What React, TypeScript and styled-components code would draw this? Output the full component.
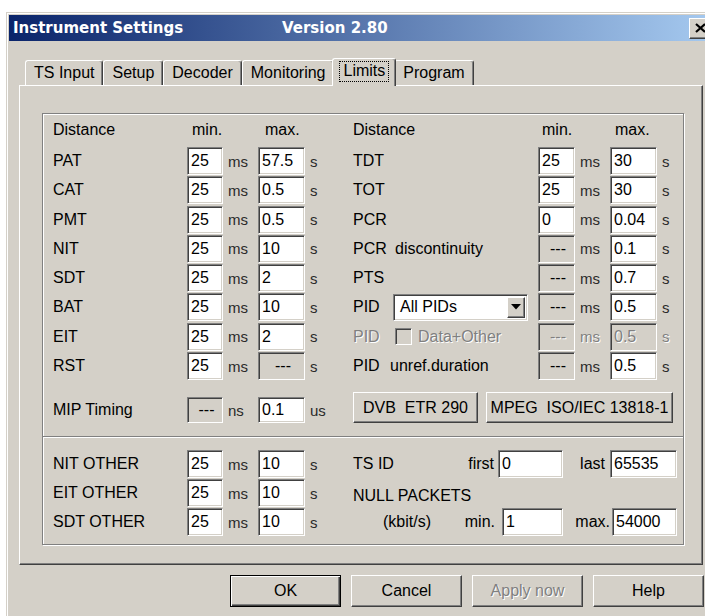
import React from "react";
import styled, { createGlobalStyle, css } from "styled-components";

const FACE = "#d4d0c8";

const GlobalStyle = createGlobalStyle`
  html, body { margin: 0; padding: 0; background: #fff; overflow: hidden; }
  body { font-family: "Liberation Sans", Arial, sans-serif; font-size: 16px; color: #000; }
  * { box-sizing: border-box; }
`;

const sunken = css`
  border: 1px solid;
  border-color: #808080 #fff #fff #808080;
  box-shadow: inset 1px 1px 0 #404040, inset -1px -1px 0 ${FACE};
`;

const raised = css`
  border: 1px solid;
  border-color: #fff #404040 #404040 #fff;
  box-shadow: inset -1px -1px 0 #808080, inset 1px 1px 0 ${FACE};
`;

const dimText = css`
  color: #808080;
  text-shadow: 1px 1px 0 #fff;
`;

const Window = styled.div`
  margin: 12px 0 0 6px;
  width: 712px;
  height: 640px;
  background: ${FACE};
  border: 1px solid;
  border-color: ${FACE} #404040 #404040 ${FACE};
  box-shadow: inset 1px 1px 0 #fff, inset -1px -1px 0 #808080;
  padding: 2px;
`;

const TitleBar = styled.div`
  height: 26px;
  display: flex;
  align-items: center;
  padding: 0 4px 0 4px;
  background: linear-gradient(90deg, #0a246a 0%, #a6caf0 100%);
  color: #fff;
  font: bold 15px "DejaVu Sans", Verdana, sans-serif;
  white-space: nowrap;
`;

const Title = styled.span`
  width: 269px;
`;

const Version = styled.span`
  flex: 1;
`;

const CloseButton = styled.div`
  ${raised};
  width: 22px;
  height: 21px;
  background: ${FACE};
  display: flex;
  align-items: center;
  justify-content: center;
`;

const Body = styled.div`
  padding: 17px 0 0 10px;
`;

const TabStrip = styled.div`
  display: flex;
  align-items: flex-end;
  height: 27px;
  padding-left: 6px;
`;

const Tab = styled.div<{ $active?: boolean }>`
  position: relative;
  z-index: ${(p) => (p.$active ? 2 : 1)};
  display: flex;
  align-items: center;
  height: ${(p) => (p.$active ? 28 : 25)}px;
  margin: ${(p) => (p.$active ? "0 -2px -1px" : "0")};
  padding: ${(p) => (p.$active ? "0 10px 2px" : "0 8px")};
  background: ${FACE};
  border-top: 1px solid #fff;
  border-left: 1px solid #fff;
  border-right: 1px solid #404040;
  box-shadow: inset -1px 0 0 #808080;
  border-radius: 3px 3px 0 0;
  white-space: nowrap;
`;

const FocusLabel = styled.span`
  border: 1px dotted #000;
  padding: 0 3px 1px;
  margin: 0 -4px;
`;

const Panel = styled.div`
  width: 684px;
  border: 1px solid;
  border-color: #fff #404040 #404040 #fff;
  box-shadow: inset -1px -1px 0 #808080;
  padding: 27px 18px 19px 22px;
`;

const GroupBox = styled.div`
  border: 1px solid #808080;
  box-shadow: 1px 1px 0 #fff, inset 1px 1px 0 #fff;
  display: flex;
  flex-direction: column;
`;

const columns = css`
  display: grid;
  grid-template-columns: 134px 36px 35px 47px 48px 185px 37px 35px 47px 1fr;
  padding-left: 10px;
`;

const HeaderGrid = styled.div`
  ${columns};
  height: 18px;
  margin-top: 7px;
  align-items: center;
`;

const LimitGrid = styled.div`
  ${columns};
  grid-auto-rows: 28px;
  row-gap: 1.3px;
  margin-top: 8px;
`;

const MipGrid = styled.div`
  ${columns};
  height: 31px;
  margin-top: 12px;
`;

const Divider = styled.div`
  height: 2px;
  margin-top: 13px;
  border-top: 1px solid #808080;
  border-bottom: 1px solid #fff;
`;

const OtherGrid = styled.div`
  display: grid;
  grid-template-columns: 134px 36px 35px 47px 48px 145px 65px 47px 67px;
  grid-template-rows: repeat(3, 28px);
  row-gap: 1px;
  padding-left: 10px;
  margin: 12px 0 8px;
`;

const Cell = styled.div<{ $dim?: boolean; $pad?: number; $end?: boolean; $bottom?: boolean }>`
  display: flex;
  align-items: ${(p) => (p.$bottom ? "flex-end" : "center")};
  justify-content: ${(p) => (p.$end ? "flex-end" : "flex-start")};
  padding-left: ${(p) => p.$pad ?? 0}px;
  white-space: pre;
  ${(p) => p.$dim && dimText};
`;

const Unit = styled(Cell)`
  padding-left: 5px;
  font-size: 15px;
  color: ${(p) => (p.$dim ? "#808080" : "#2a2a2a")};
`;

const Lead = styled.span<{ $w: number }>`
  display: inline-block;
  width: ${(p) => p.$w}px;
`;

const Field = styled.input<{ $face?: boolean; $dim?: boolean; $center?: boolean }>`
  ${sunken};
  width: 100%;
  height: 100%;
  min-width: 0;
  margin: 0;
  padding: 0 0 0 3px;
  font: 16px "Liberation Sans", Arial, sans-serif;
  color: #000;
  background: ${(p) => (p.$face ? FACE : "#fff")};
  text-align: ${(p) => (p.$center ? "center" : "left")};
  outline: none;
  ${(p) => p.$dim && dimText};
`;

const ShortField = styled(Field)`
  align-self: end;
  height: 26px;
`;

const OffsetField = styled(Field)<{ $shift: number }>`
  margin-left: ${(p) => p.$shift}px;
  width: calc(100% - ${(p) => p.$shift}px);
`;

const Combo = styled.div`
  ${sunken};
  width: 135px;
  height: 27px;
  background: #fff;
  display: flex;
  align-items: center;
  justify-content: space-between;
  padding: 0 2px 0 6px;
`;

const ComboArrow = styled.div`
  ${raised};
  width: 18px;
  height: 21px;
  background: ${FACE};
  display: flex;
  align-items: center;
  justify-content: center;
`;

const CheckBox = styled.span`
  ${sunken};
  display: inline-block;
  width: 17px;
  height: 17px;
  margin-right: 6px;
  background: ${FACE};
`;

const StandardButtons = styled.div`
  grid-column: 6 / -1;
  display: flex;
  gap: 8px;
`;

const PushButton = styled.button<{ $w?: number; $default?: boolean }>`
  ${raised};
  width: ${(p) => p.$w ?? 111}px;
  height: ${(p) => (p.$w ? 31 : 32)}px;
  padding: 0;
  background: ${FACE};
  font: 16px "Liberation Sans", Arial, sans-serif;
  color: #000;
  white-space: pre;
  ${(p) =>
    p.$default &&
    css`
      border: 1px solid #000;
      box-shadow: inset 1px 1px 0 #fff, inset -1px -1px 0 #404040, inset -2px -2px 0 #808080;
    `}
  &:disabled {
    ${dimText};
  }
`;

const ButtonRow = styled.div`
  display: flex;
  gap: 10px;
  margin-top: 10px;
  padding-left: 211px;
`;

type Side = {
  label: React.ReactNode;
  min: string | null;
  max: string | null;
  dim?: boolean;
};

const leftRows: Side[] = [
  { label: "PAT", min: "25", max: "57.5" },
  { label: "CAT", min: "25", max: "0.5" },
  { label: "PMT", min: "25", max: "0.5" },
  { label: "NIT", min: "25", max: "10" },
  { label: "SDT", min: "25", max: "2" },
  { label: "BAT", min: "25", max: "10" },
  { label: "EIT", min: "25", max: "2" },
  { label: "RST", min: "25", max: null },
];

const rightRows: Side[] = [
  { label: "TDT", min: "25", max: "30" },
  { label: "TOT", min: "25", max: "30" },
  { label: "PCR", min: "0", max: "0.04" },
  {
    label: (
      <>
        <Lead $w={42}>PCR</Lead>discontinuity
      </>
    ),
    min: null,
    max: "0.1",
  },
  { label: "PTS", min: null, max: "0.7" },
  {
    label: (
      <>
        <Lead $w={40}>PID</Lead>
        <Combo>
          All PIDs
          <ComboArrow>
            <svg width="10" height="6" viewBox="0 0 10 6">
              <polygon points="0,0 10,0 5,5.5" fill="#000" />
            </svg>
          </ComboArrow>
        </Combo>
      </>
    ),
    min: null,
    max: "0.5",
  },
  {
    label: (
      <>
        <Lead $w={42}>PID</Lead>
        <CheckBox />
        Data+Other
      </>
    ),
    min: null,
    max: "0.5",
    dim: true,
  },
  {
    label: (
      <>
        <Lead $w={37}>PID</Lead>unref.duration
      </>
    ),
    min: null,
    max: "0.5",
  },
];

function SideCells({ side }: { side: Side }) {
  return (
    <>
      <Cell $dim={side.dim}>{side.label}</Cell>
      {side.min === null ? (
        <Field readOnly defaultValue="---" $face $center $dim={side.dim} />
      ) : (
        <Field readOnly defaultValue={side.min} />
      )}
      <Unit $dim={side.dim}>ms</Unit>
      {side.max === null ? (
        <Field readOnly defaultValue="---" $face $center />
      ) : (
        <Field readOnly defaultValue={side.max} $face={side.dim} $dim={side.dim} />
      )}
      <Unit $dim={side.dim}>s</Unit>
    </>
  );
}

const otherRows = [
  { label: "NIT OTHER", min: "25", max: "10" },
  { label: "EIT OTHER", min: "25", max: "10" },
  { label: "SDT OTHER", min: "25", max: "10" },
];

const tabs = ["TS Input", "Setup", "Decoder", "Monitoring", "Limits", "Program"];

export default function App() {
  return (
    <>
      <GlobalStyle />
      <Window>
        <TitleBar>
          <Title>Instrument Settings</Title>
          <Version>Version 2.80</Version>
          <CloseButton>
            <svg width="11" height="10" viewBox="0 0 11 10">
              <path d="M1 1 L10 9 M10 1 L1 9" stroke="#000" strokeWidth="2.2" />
            </svg>
          </CloseButton>
        </TitleBar>
        <Body>
          <TabStrip>
            {tabs.map((t) => (
              <Tab key={t} $active={t === "Limits"}>
                {t === "Limits" ? <FocusLabel>{t}</FocusLabel> : t}
              </Tab>
            ))}
          </TabStrip>
          <Panel>
            <GroupBox>
              <HeaderGrid>
                <Cell>Distance</Cell>
                <Cell $pad={5}>min.</Cell>
                <Cell />
                <Cell $pad={7}>max.</Cell>
                <Cell />
                <Cell>Distance</Cell>
                <Cell $pad={4}>min.</Cell>
                <Cell />
                <Cell $pad={5}>max.</Cell>
                <Cell />
              </HeaderGrid>
              <LimitGrid>
                {leftRows.map((l, i) => (
                  <React.Fragment key={i}>
                    <SideCells side={l} />
                    <SideCells side={rightRows[i]} />
                  </React.Fragment>
                ))}
              </LimitGrid>
              <MipGrid>
                <Cell style={{ paddingTop: 5 }}>MIP Timing</Cell>
                <ShortField readOnly defaultValue="---" $face $center />
                <Unit style={{ paddingTop: 5 }}>ns</Unit>
                <ShortField readOnly defaultValue="0.1" />
                <Unit style={{ paddingTop: 5 }}>us</Unit>
                <StandardButtons>
                  <PushButton $w={125}>DVB  ETR 290</PushButton>
                  <PushButton $w={187}>MPEG  ISO/IEC 13818-1</PushButton>
                </StandardButtons>
              </MipGrid>
              <Divider />
              <OtherGrid>
                {otherRows.map((r, i) => (
                  <React.Fragment key={r.label}>
                    <Cell style={{ gridRow: i + 1, gridColumn: 1 }}>{r.label}</Cell>
                    <Field readOnly defaultValue={r.min} style={{ gridRow: i + 1, gridColumn: 2 }} />
                    <Unit style={{ gridRow: i + 1, gridColumn: 3 }}>ms</Unit>
                    <Field readOnly defaultValue={r.max} style={{ gridRow: i + 1, gridColumn: 4 }} />
                    <Unit style={{ gridRow: i + 1, gridColumn: 5 }}>s</Unit>
                  </React.Fragment>
                ))}
                <Cell style={{ gridRow: 1, gridColumn: 6, justifyContent: "space-between", paddingRight: 4 }}>
                  <span>TS ID</span>
                  <span>first</span>
                </Cell>
                <Field readOnly defaultValue="0" style={{ gridRow: 1, gridColumn: 7 }} />
                <Cell $end style={{ gridRow: 1, gridColumn: 8, paddingRight: 5 }}>
                  last
                </Cell>
                <Field readOnly defaultValue="65535" style={{ gridRow: 1, gridColumn: 9 }} />
                <Cell $bottom style={{ gridRow: 2, gridColumn: "6 / span 4", paddingBottom: 2 }}>
                  NULL PACKETS
                </Cell>
                <Cell style={{ gridRow: 3, gridColumn: 6, justifyContent: "space-between", padding: "0 3px 0 30px" }}>
                  <span>(kbit/s)</span>
                  <span>min.</span>
                </Cell>
                <OffsetField readOnly defaultValue="1" $shift={4} style={{ gridRow: 3, gridColumn: 7 }} />
                <Cell $end style={{ gridRow: 3, gridColumn: 8 }}>
                  max.
                </Cell>
                <OffsetField readOnly defaultValue="54000" $shift={2} style={{ gridRow: 3, gridColumn: 9 }} />
              </OtherGrid>
            </GroupBox>
          </Panel>
          <ButtonRow>
            <PushButton $default>OK</PushButton>
            <PushButton>Cancel</PushButton>
            <PushButton disabled>Apply now</PushButton>
            <PushButton>Help</PushButton>
          </ButtonRow>
        </Body>
      </Window>
    </>
  );
}
